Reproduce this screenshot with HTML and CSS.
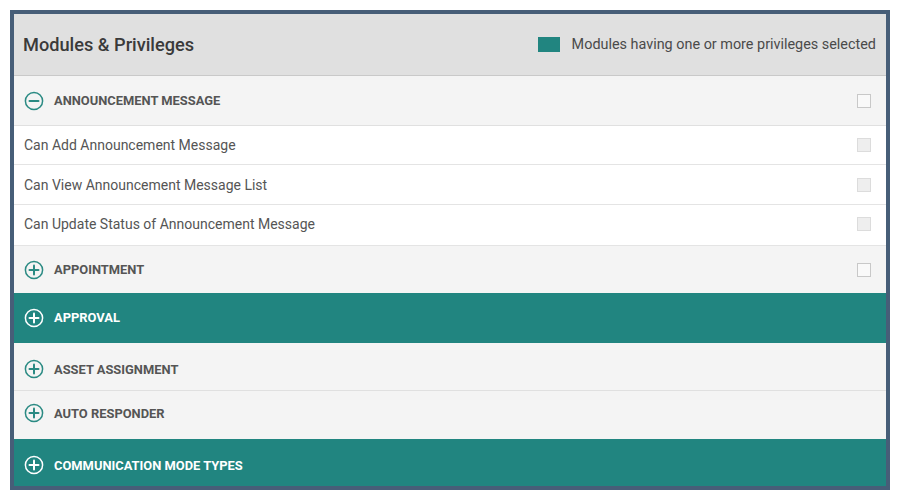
FILE: index.html
```html
<!DOCTYPE html>
<html>
<head>
<meta charset="utf-8">
<link rel="stylesheet" href="styles.css">
</head>
<body>
<div class="panel">
  <div class="panel-head">
    <h2 class="title">Modules &amp; Privileges</h2>
    <div class="legend"><span class="swatch"></span><span>Modules having one or more privileges selected</span></div>
  </div>
  <div class="list">
    <div class="module m-ann">
      <svg class="toggle" viewBox="0 0 20 20"><circle cx="10" cy="10" r="8.6"/><line x1="5.5" y1="10" x2="14.5" y2="10"/></svg>
      <span class="mod-name">ANNOUNCEMENT MESSAGE</span>
      <span class="check"></span>
    </div>
    <div class="priv p1"><span class="priv-name">Can Add Announcement Message</span><span class="check disabled"></span></div>
    <div class="priv p2"><span class="priv-name">Can View Announcement Message List</span><span class="check disabled"></span></div>
    <div class="priv p3"><span class="priv-name">Can Update Status of Announcement Message</span><span class="check disabled"></span></div>
    <div class="module m-appt">
      <svg class="toggle" viewBox="0 0 20 20"><circle cx="10" cy="10" r="8.6"/><line x1="5.5" y1="10" x2="14.5" y2="10"/><line x1="10" y1="5.5" x2="10" y2="14.5"/></svg>
      <span class="mod-name">APPOINTMENT</span>
      <span class="check"></span>
    </div>
    <div class="module active m-appr">
      <svg class="toggle" viewBox="0 0 20 20"><circle cx="10" cy="10" r="8.6"/><line x1="5.5" y1="10" x2="14.5" y2="10"/><line x1="10" y1="5.5" x2="10" y2="14.5"/></svg>
      <span class="mod-name">APPROVAL</span>
    </div>
    <div class="module m-asset">
      <svg class="toggle" viewBox="0 0 20 20"><circle cx="10" cy="10" r="8.6"/><line x1="5.5" y1="10" x2="14.5" y2="10"/><line x1="10" y1="5.5" x2="10" y2="14.5"/></svg>
      <span class="mod-name">ASSET ASSIGNMENT</span>
    </div>
    <div class="module m-auto">
      <svg class="toggle" viewBox="0 0 20 20"><circle cx="10" cy="10" r="8.6"/><line x1="5.5" y1="10" x2="14.5" y2="10"/><line x1="10" y1="5.5" x2="10" y2="14.5"/></svg>
      <span class="mod-name">AUTO RESPONDER</span>
    </div>
    <div class="module active m-comm">
      <svg class="toggle" viewBox="0 0 20 20"><circle cx="10" cy="10" r="8.6"/><line x1="5.5" y1="10" x2="14.5" y2="10"/><line x1="10" y1="5.5" x2="10" y2="14.5"/></svg>
      <span class="mod-name">COMMUNICATION MODE TYPES</span>
    </div>
  </div>
</div>
</body>
</html>
```
FILE: styles.css
```css
html, body {
  margin: 0;
  padding: 0;
  background: #ffffff;
}
body {
  padding: 10px;
  font-family: Roboto, "Open Sans", sans-serif;
}
.panel {
  width: 872px;
  height: 472px;
  border: 4px solid #475e78;
  overflow: hidden;
  background: #f4f4f4;
}
.panel-head {
  height: 61px;
  background: #e0e0e0;
  border-bottom: 1px solid #c9c9c9;
  display: flex;
  align-items: center;
  justify-content: space-between;
  padding: 0 10px 0 9px;
}
.title {
  margin: 0;
  font-size: 18.2px;
  font-weight: 500;
  color: #3a3a3a;
}
.legend {
  display: flex;
  align-items: center;
  gap: 12px;
  font-size: 14.4px;
  color: #4a4a4a;
}
.swatch {
  width: 22px;
  height: 15px;
  background: #218580;
}
.module {
  box-sizing: border-box;
  height: 49px;
  display: flex;
  align-items: center;
  padding: 0 15px 0 10px;
  background: #f4f4f4;
  border-bottom: 1px solid #e0e0e0;
}
.module.active {
  background: #218580;
  border-bottom: 0;
}
.m-ann { height: 50px; }
.m-appt { height: 47px; border-bottom: 0; }
.m-appr { height: 50px; padding-bottom: 1px; }
.m-asset { height: 48px; padding-top: 5px; }
.m-auto { height: 48px; border-bottom: 0; padding-bottom: 4px; }
.m-comm { height: 48px; padding-top: 4px; }
.toggle {
  width: 20px;
  height: 20px;
  fill: none;
  stroke: #2a8a83;
  stroke-width: 1.5;
  stroke-linecap: round;
  margin-right: 10px;
}
.toggle line {
  stroke-width: 2;
}
.module.active .toggle {
  stroke: #ffffff;
}
.mod-name {
  flex: 1;
  font-size: 12.9px;
  font-weight: 700;
  color: #555;
}
.module.active .mod-name {
  color: #ffffff;
}
.priv {
  box-sizing: border-box;
  display: flex;
  align-items: center;
  padding: 0 15px 0 10px;
  background: #ffffff;
  border-bottom: 1px solid #e4e4e4;
}
.p1 { height: 39px; }
.p2 { height: 40px; }
.p3 { height: 41px; padding-bottom: 2px; }
.priv-name {
  flex: 1;
  font-size: 14px;
  color: #555;
}
.check {
  width: 12px;
  height: 12px;
  border: 1px solid #c8c8c8;
  background: #f9f9f9;
}
.check.disabled {
  border-color: #dcdcdc;
  background: #eeeeee;
}
```
